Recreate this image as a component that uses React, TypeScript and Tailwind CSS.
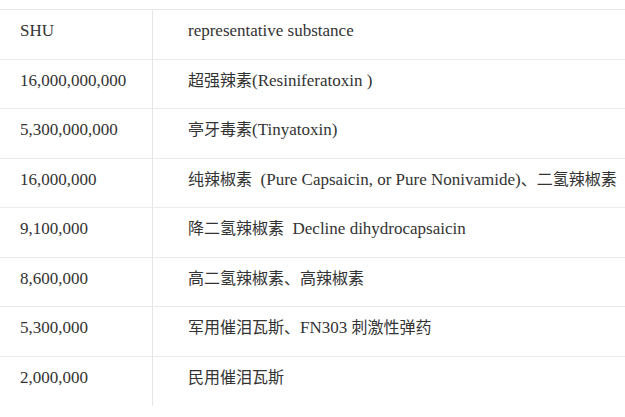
import React from 'react';

interface Row {
  shu: string;
  substance: string;
}

const rows: Row[] = [
  { shu: 'SHU', substance: 'representative substance' },
  { shu: '16,000,000,000', substance: '超强辣素(Resiniferatoxin )' },
  { shu: '5,300,000,000', substance: '亭牙毒素(Tinyatoxin)' },
  { shu: '16,000,000', substance: '纯辣椒素  (Pure Capsaicin, or Pure Nonivamide)、二氢辣椒素' },
  { shu: '9,100,000', substance: '降二氢辣椒素  Decline dihydrocapsaicin' },
  { shu: '8,600,000', substance: '高二氢辣椒素、高辣椒素' },
  { shu: '5,300,000', substance: '军用催泪瓦斯、FN303 刺激性弹药' },
  { shu: '2,000,000', substance: '民用催泪瓦斯' },
];

// latin runs are set a touch larger than the CJK runs, like the source page
const MixedText: React.FC<{ text: string }> = ({ text }) => {
  const parts = text.split(/([\u3000-\u9fff\uff00-\uffef]+)/).filter(Boolean);
  return (
    <>
      {parts.map((p, i) =>
        /[\u3000-\u9fff\uff00-\uffef]/.test(p) ? (
          <span key={i} className="text-[16px]">{p}</span>
        ) : (
          <span key={i} className="text-[17px]">{p}</span>
        )
      )}
    </>
  );
};

const ScovilleTable: React.FC = () => (
  <div className="border-t border-[#e6e6e6]">
    {rows.map((row, i) => (
      <div
        key={row.shu}
        className={`flex h-[49.5px] ${i < rows.length - 1 ? 'border-b border-[#ebebeb]' : ''}`}
      >
        <div className="w-[153px] shrink-0 border-r border-[#e6e6e6] pl-5 pt-[11px] text-[17px]">
          {row.shu}
        </div>
        <div className="flex-1 whitespace-pre pl-[35px] pt-[11px]">
          <MixedText text={row.substance} />
        </div>
      </div>
    ))}
  </div>
);

export default function App() {
  return (
    <div
      className="h-[417px] w-[625px] overflow-hidden bg-white pt-[9px] leading-5 text-[#333333]"
      style={{ fontFamily: '"Liberation Serif", "Noto Sans CJK SC", serif' }}
    >
      <ScovilleTable />
    </div>
  );
}
